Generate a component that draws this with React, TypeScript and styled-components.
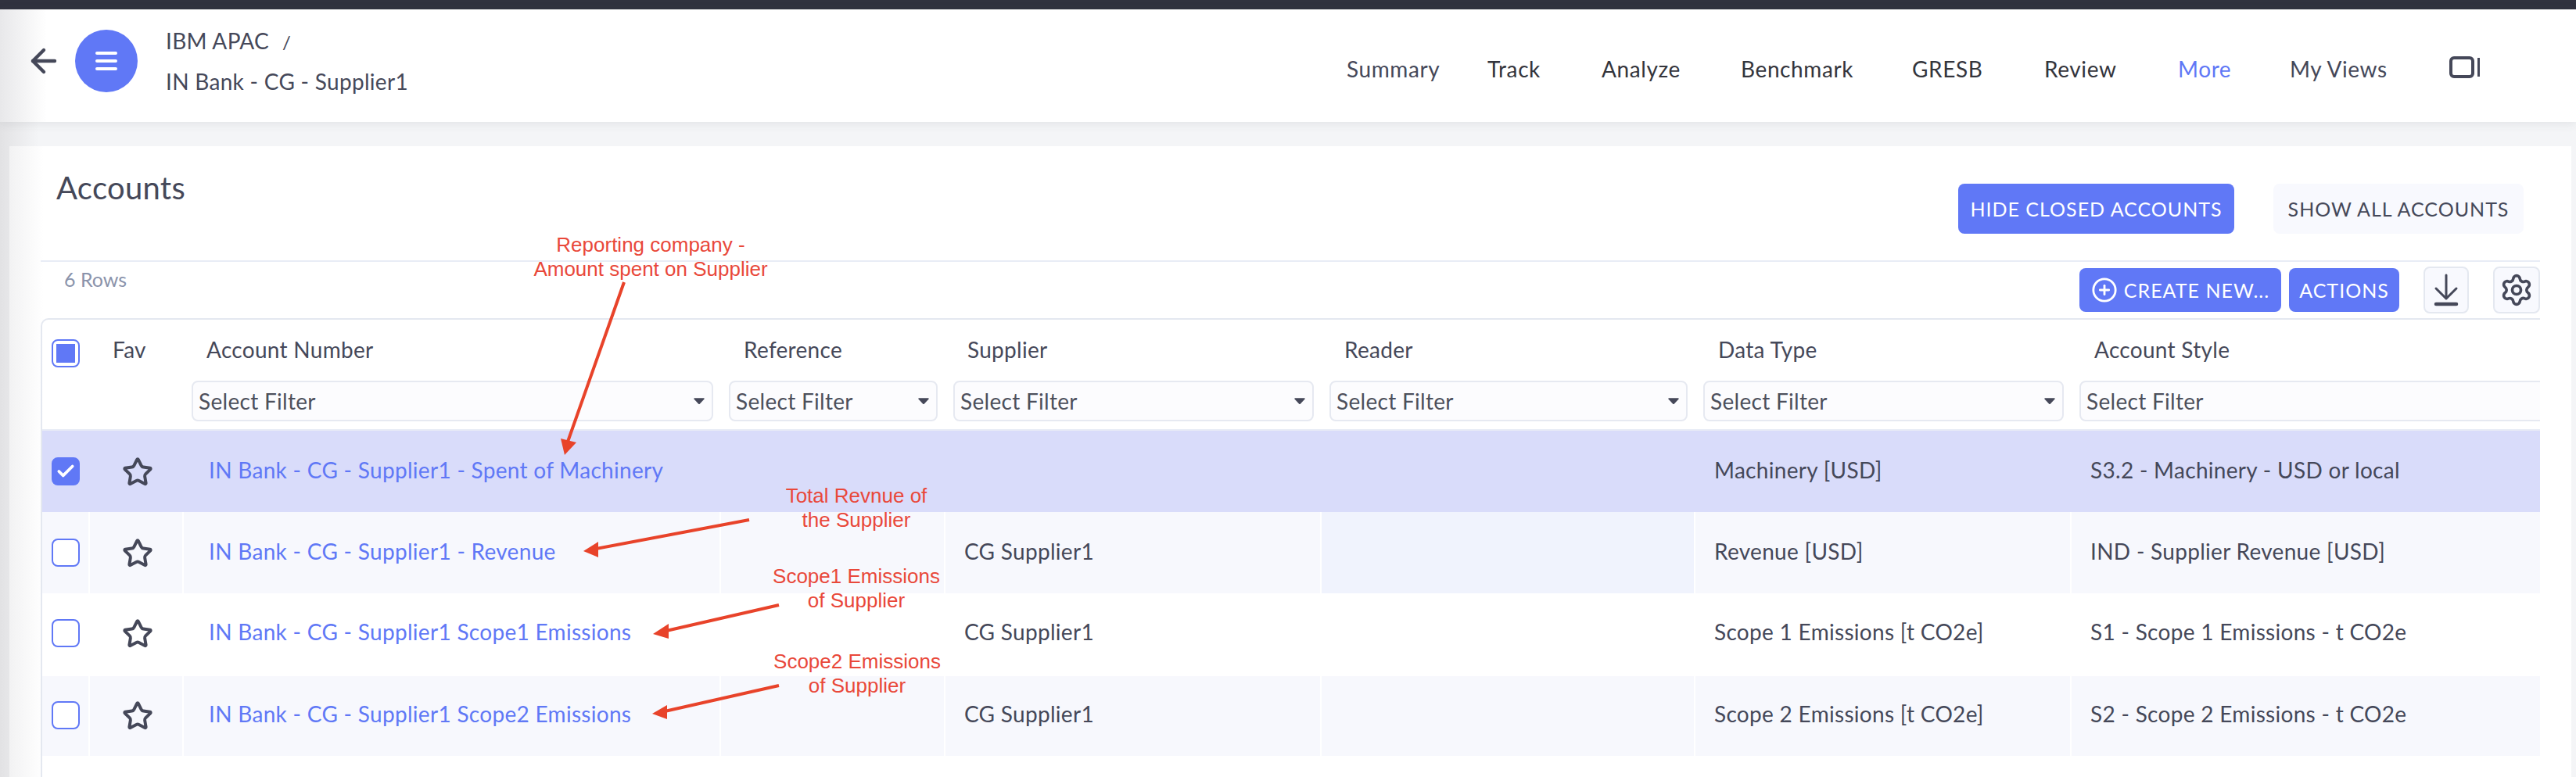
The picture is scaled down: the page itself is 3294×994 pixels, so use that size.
import React from "react";
import styled, { createGlobalStyle } from "styled-components";
import { ArrowLeft, Star, CirclePlus, Settings, Check } from "lucide-react";

const INK = "#454859";
const BLUE = "#6078f6";
const COLS = "61px 120px 687px 287px 481px 478px 481px 599px";

const Global = createGlobalStyle`
  html, body { margin: 0; padding: 0; background: #f4f5f7; }
  body { font-family: Lato, "Open Sans", sans-serif; color: ${INK}; }
`;

const Page = styled.div`
  width: 3294px;
  height: 994px;
  overflow: hidden;
  position: relative;
  display: flex;
  flex-direction: column;
  background: linear-gradient(90deg, #e2e2e4 0, #f4f5f7 50px);
`;
const TopStrip = styled.div`
  height: 12px;
  flex: none;
  background: #30323f;
`;
const Header = styled.header`
  height: 144px;
  flex: none;
  display: flex;
  align-items: center;
  padding: 0 122px 12px 32px;
  box-sizing: border-box;
  background: linear-gradient(90deg, #e8e8ea 0, #fff 60px);
  box-shadow: 0 2px 12px rgba(60, 64, 80, 0.1);
  position: relative;
`;
const BackButton = styled.div`
  width: 48px;
  height: 48px;
  display: flex;
  color: ${INK};
`;
const MenuCircle = styled.div`
  width: 80px;
  height: 80px;
  margin-left: 16px;
  border-radius: 50%;
  background: ${BLUE};
  display: flex;
  flex-direction: column;
  align-items: center;
  justify-content: center;
  gap: 6px;
`;
const MenuLine = styled.span`
  width: 28px;
  height: 4px;
  border-radius: 2px;
  background: #fff;
`;
const Crumbs = styled.div`
  margin-left: 36px;
  display: flex;
  flex-direction: column;
  font-size: 28px;
  line-height: 51px;
  letter-spacing: 0.3px;
`;
const Slash = styled.span`
  margin-left: 17px;
  font-size: 24px;
`;
const Nav = styled.nav`
  margin-left: auto;
  display: grid;
  grid-template-columns: 180px 146px 178px 219px 169px 171px 143px 204px 40px;
  align-items: center;
  padding-top: 20px;
  font-size: 28px;
`;
const NavItem = styled.span<{ $active?: boolean; $soft?: boolean }>`
  color: ${(p) => (p.$active ? BLUE : p.$soft ? INK : "#34353c")};
  letter-spacing: 0.6px;
`;
const NavIcon = styled.svg`
  margin-top: -4px;
`;
const Card = styled.main`
  flex: 1;
  margin: 31px 6px 0 12px;
  padding: 0 40px;
  background: linear-gradient(90deg, #f2f2f3 0, #fff 44px);
  display: flex;
  flex-direction: column;
`;
const TitleRow = styled.div`
  height: 148px;
  box-sizing: border-box;
  flex: none;
  display: flex;
  justify-content: space-between;
  align-items: flex-start;
  border-bottom: 2px solid #e8ecf6;
`;
const Title = styled.h1`
  margin: 29px 0 0 20px;
  font-size: 40px;
  line-height: 48px;
  font-weight: 400;
  letter-spacing: 0.3px;
`;
const TitleActions = styled.div`
  margin: 48px 21px 0 0;
  display: flex;
  gap: 50px;
`;
const Button = styled.button<{ $ghost?: boolean; $w: number; $h: number }>`
  width: ${(p) => p.$w}px;
  height: ${(p) => p.$h}px;
  padding: 0;
  border: 0;
  border-radius: 8px;
  background: ${(p) => (p.$ghost ? "#f8f9fe" : BLUE)};
  color: ${(p) => (p.$ghost ? INK : "#fff")};
  font-family: inherit;
  font-size: 25px;
  font-weight: 400;
  letter-spacing: 1px;
  display: flex;
  align-items: center;
  justify-content: center;
  gap: 8px;
`;
const ToolRow = styled.div`
  height: 72px;
  flex: none;
  display: flex;
  align-items: flex-start;
  padding-top: 6px;
  box-sizing: border-box;
`;
const RowCount = styled.span`
  margin: 1px 0 0 30px;
  font-size: 25px;
  line-height: 30px;
  color: #8a93ab;
`;
const ToolGroup = styled.div`
  margin-left: auto;
  display: flex;
  align-items: center;
  gap: 10px;
`;
const IconButton = styled.div<{ $w: number }>`
  width: ${(p) => p.$w}px;
  height: 60px;
  margin-left: 21px;
  box-sizing: border-box;
  border: 2px solid #e4e8f0;
  border-radius: 8px;
  background: #f8f9fe;
  color: ${INK};
  display: flex;
  align-items: center;
  justify-content: center;
`;
const Table = styled.section`
  flex: 1;
  border: 2px solid #e4e8f0;
  border-width: 2px 0 0 2px;
  border-top-left-radius: 10px;
  overflow: hidden;
`;
const HeadRow = styled.div`
  display: grid;
  grid-template-columns: ${COLS};
  height: 142px;
  box-sizing: border-box;
  border-bottom: 2px solid #e8ecf6;
`;
const HeadCell = styled.div`
  min-width: 0;
  padding: 0 10px;
  display: flex;
  flex-direction: column;
  font-size: 28px;
`;
const HeadLabel = styled.div<{ $pl: number }>`
  height: 78px;
  padding: 22px 0 0 ${(p) => p.$pl}px;
  box-sizing: border-box;
  line-height: 32px;
  white-space: nowrap;
  letter-spacing: 0.3px;
`;
const HeadCheck = styled.div`
  padding: 25px 0 0 12px;
`;
const Filter = styled.div<{ $clip?: boolean }>`
  height: 52px;
  width: ${(p) => (p.$clip ? "720px" : "auto")};
  box-sizing: border-box;
  border: 2px solid #e6e9f1;
  border-radius: 8px;
  background: #fcfcfe;
  padding: 0 9px 0 7px;
  display: flex;
  align-items: center;
  justify-content: space-between;
  font-size: 28px;
  letter-spacing: 0.3px;
  color: #4d505c;
`;
const Row = styled.div<{ $h: number; $bg: string; $pad: number }>`
  display: grid;
  grid-template-columns: ${COLS};
  height: ${(p) => p.$h}px;
  background: ${(p) => p.$bg};
  --pad: ${(p) => p.$pad}px;
`;
const Cell = styled.div<{ $tint?: boolean; $split?: boolean }>`
  min-width: 0;
  padding: calc(var(--pad) - 2px) 0 0 24px;
  box-sizing: border-box;
  font-size: 28px;
  line-height: 32px;
  letter-spacing: 0.3px;
  white-space: nowrap;
  background: ${(p) => (p.$tint ? "#f0f3fd" : "transparent")};
  border-right: ${(p) => (p.$split ? "2px solid #fff" : "0")};
`;
const LinkCell = styled(Cell)`
  padding-left: 32px;
  color: ${BLUE};
`;
const BoxCell = styled(Cell)`
  padding: calc(var(--pad) - 2px) 0 0 12px;
`;
const StarCell = styled(Cell)`
  padding: calc(var(--pad) - 3px) 0 0 41px;
  color: ${INK};
`;
const Box = styled.div<{ $on?: boolean }>`
  width: 36px;
  height: 36px;
  box-sizing: border-box;
  border: 2px solid ${BLUE};
  border-radius: 8px;
  background: ${(p) => (p.$on ? BLUE : "#fff")};
  color: #fff;
  display: flex;
  align-items: center;
  justify-content: center;
`;
const BoxFill = styled.span`
  width: 24px;
  height: 24px;
  background: ${BLUE};
`;
const Notes = styled.svg`
  position: absolute;
  left: 0;
  top: 0;
  pointer-events: none;
`;
const Note = styled.div<{ $cx: number; $y: number }>`
  position: absolute;
  left: ${(p) => p.$cx}px;
  top: ${(p) => p.$y}px;
  transform: translateX(-50%);
  font-family: "Liberation Sans", Arial, sans-serif;
  font-size: 26px;
  line-height: 31px;
  color: #e9483a;
  text-align: center;
  white-space: nowrap;
`;

const nav = ["Summary", "Track", "Analyze", "Benchmark", "GRESB", "Review", "More", "My Views"];
const heads: [string, number][] = [
  ["Account Number", 19],
  ["Reference", 19],
  ["Supplier", 18],
  ["Reader", 19],
  ["Data Type", 19],
  ["Account Style", 19],
];
type R = { h: number; pad: number; bg: string; link: string; sup?: string; type: string; style: string; on?: boolean; split?: boolean; tint?: boolean };
const rows: R[] = [
  { h: 104, pad: 36, bg: "#d9dcfa", link: "IN Bank - CG - Supplier1 - Spent of Machinery", type: "Machinery [USD]", style: "S3.2 - Machinery - USD or local", on: true },
  { h: 104, pad: 36, bg: "#f7f8fd", link: "IN Bank - CG - Supplier1 - Revenue", sup: "CG Supplier1", type: "Revenue [USD]", style: "IND - Supplier Revenue [USD]", split: true, tint: true },
  { h: 106, pad: 35, bg: "#ffffff", link: "IN Bank - CG - Supplier1 Scope1 Emissions", sup: "CG Supplier1", type: "Scope 1 Emissions [t CO2e]", style: "S1 - Scope 1 Emissions - t CO2e" },
  { h: 102, pad: 34, bg: "#f7f8fd", link: "IN Bank - CG - Supplier1 Scope2 Emissions", sup: "CG Supplier1", type: "Scope 2 Emissions [t CO2e]", style: "S2 - Scope 2 Emissions - t CO2e", split: true },
];
const arrows = [
  { l: "798,361 726,565", h: "722,582 717,561 737,566" },
  { l: "958,665 762,702", h: "746,705 765,693 765,713" },
  { l: "996,774 852,807", h: "835,811 855,798 855,817" },
  { l: "996,877 850,910", h: "834,913 853,902 853,920" },
];

const Caret = () => (
  <svg width="14" height="10" viewBox="0 0 14 10">
    <path d="M1 1.2h12a.8.8 0 0 1 .6 1.3L8 8.6a1.4 1.4 0 0 1-2 0L.4 2.5A.8.8 0 0 1 1 1.2z" fill={INK} />
  </svg>
);

export default function App() {
  return (
    <Page>
      <Global />
      <TopStrip />
      <Header>
        <BackButton>
          <ArrowLeft size={48} strokeWidth={2.2} />
        </BackButton>
        <MenuCircle>
          <MenuLine />
          <MenuLine />
          <MenuLine />
        </MenuCircle>
        <Crumbs>
          <div>
            IBM APAC<Slash>/</Slash>
          </div>
          <div>IN Bank - CG - Supplier1</div>
        </Crumbs>
        <Nav>
          {nav.map((n, i) => (
            <NavItem key={n} $active={n === "More"} $soft={i === 0 || n === "My Views"}>
              {n}
            </NavItem>
          ))}
          <NavIcon width="40" height="28" viewBox="0 0 40 28">
            <rect x="2" y="2" width="28" height="24" rx="4" fill="none" stroke={INK} strokeWidth="4" />
            <rect x="36" y="2" width="3" height="24" fill={INK} />
          </NavIcon>
        </Nav>
      </Header>
      <Card>
        <TitleRow>
          <Title>Accounts</Title>
          <TitleActions>
            <Button $w={353} $h={64}>HIDE CLOSED ACCOUNTS</Button>
            <Button $w={320} $h={64} $ghost>SHOW ALL ACCOUNTS</Button>
          </TitleActions>
        </TitleRow>
        <ToolRow>
          <RowCount>6 Rows</RowCount>
          <ToolGroup>
            <Button $w={258} $h={56}>
              <CirclePlus size={34} strokeWidth={2} />
              CREATE NEW...
            </Button>
            <Button $w={141} $h={56}>ACTIONS</Button>
            <IconButton $w={58}>
              <svg width="36" height="44" viewBox="0 0 36 44" fill="none" stroke={INK} strokeLinecap="round">
                <path d="M18 3v30M5 20l13 13 13-13" strokeWidth="3" strokeLinejoin="round" />
                <path d="M5 40h26" strokeWidth="4.5" />
              </svg>
            </IconButton>
            <IconButton $w={60}>
              <Settings size={44} strokeWidth={2} />
            </IconButton>
          </ToolGroup>
        </ToolRow>
        <Table>
          <HeadRow>
            <HeadCell as={HeadCheck}>
              <Box>
                <BoxFill />
              </Box>
            </HeadCell>
            <HeadCell>
              <HeadLabel $pl={19}>Fav</HeadLabel>
            </HeadCell>
            {heads.map(([h, pl], i) => (
              <HeadCell key={h}>
                <HeadLabel $pl={pl}>{h}</HeadLabel>
                <Filter $clip={i === 5}>
                  Select Filter
                  {i < 5 && <Caret />}
                </Filter>
              </HeadCell>
            ))}
          </HeadRow>
          {rows.map((r) => (
            <Row key={r.link} $h={r.h} $bg={r.bg} $pad={r.pad}>
              <BoxCell $split={r.split}>
                <Box $on={r.on}>{r.on && <Check size={26} strokeWidth={3.5} />}</Box>
              </BoxCell>
              <StarCell $split={r.split}>
                <Star size={40} strokeWidth={2.4} />
              </StarCell>
              <LinkCell $split={r.split}>{r.link}</LinkCell>
              <Cell $split={r.split} />
              <Cell $split={r.split}>{r.sup}</Cell>
              <Cell $split={r.split} $tint={r.tint} />
              <Cell $split={r.split}>{r.type}</Cell>
              <Cell>{r.style}</Cell>
            </Row>
          ))}
        </Table>
      </Card>
      <Notes width="3294" height="994" viewBox="0 0 3294 994">
        {arrows.map((a) => (
          <g key={a.l}>
            <polyline points={a.l} fill="none" stroke="#e8432a" strokeWidth="4" />
            <polygon points={a.h} fill="#e8432a" />
          </g>
        ))}
      </Notes>
      <Note $cx={832} $y={298}>Reporting company -<br />Amount spent on Supplier</Note>
      <Note $cx={1095} $y={619}>Total Revnue of<br />the Supplier</Note>
      <Note $cx={1095} $y={722}>Scope1 Emissions<br />of Supplier</Note>
      <Note $cx={1096} $y={831}>Scope2 Emissions<br />of Supplier</Note>
    </Page>
  );
}
